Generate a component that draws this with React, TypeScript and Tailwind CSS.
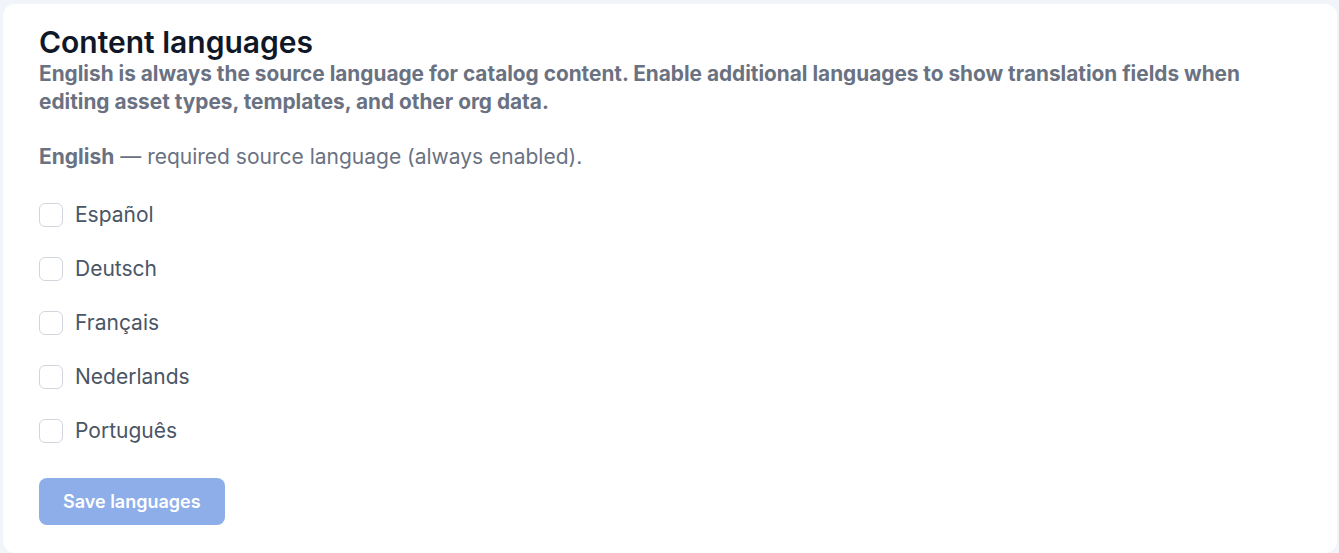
import { useState } from 'react';

const LANGUAGES = [
  { code: 'es', label: 'Español' },
  { code: 'de', label: 'Deutsch' },
  { code: 'fr', label: 'Français' },
  { code: 'nl', label: 'Nederlands' },
  { code: 'pt', label: 'Português' },
];

export default function App() {
  const [enabled, setEnabled] = useState<string[]>([]);

  const toggle = (code: string) =>
    setEnabled((prev) => (prev.includes(code) ? prev.filter((c) => c !== code) : [...prev, code]));

  return (
    <div className="min-h-screen bg-[#f1f4f9] pl-[3px] pr-[2px] pt-[4px] font-['Inter',sans-serif]">
      <div className="min-h-[549px] rounded-xl bg-white px-9 pt-[21px] pb-7">
        <h2 className="text-[30px] leading-[34px] font-semibold text-gray-900">Content languages</h2>
        <p className="mt-[1px] text-[20.8px] leading-7 font-bold text-gray-500">
          English is always the source language for catalog content. Enable additional languages to show
          translation fields when editing asset types, templates, and other org data.
        </p>

        <p className="mt-[27px] text-[21px] leading-7 text-gray-500">
          <span className="font-bold">English</span> — required source language (always enabled).
        </p>

        <div className="mt-[30px] flex flex-col gap-[26px]">
          {LANGUAGES.map((lang) => (
            <label key={lang.code} className="flex h-7 items-center gap-3 cursor-pointer">
              <input
                type="checkbox"
                checked={enabled.includes(lang.code)}
                onChange={() => toggle(lang.code)}
                className="h-6 w-6 appearance-none rounded-md border border-gray-300 bg-white checked:bg-blue-600"
              />
              <span className="text-[21px] leading-7 text-gray-600">{lang.label}</span>
            </label>
          ))}
        </div>

        <button
          disabled={enabled.length === 0}
          className="mt-[33px] h-[47px] rounded-lg bg-[#8daee8] px-6 text-[18px] font-semibold text-white"
        >
          Save languages
        </button>
      </div>
    </div>
  );
}
